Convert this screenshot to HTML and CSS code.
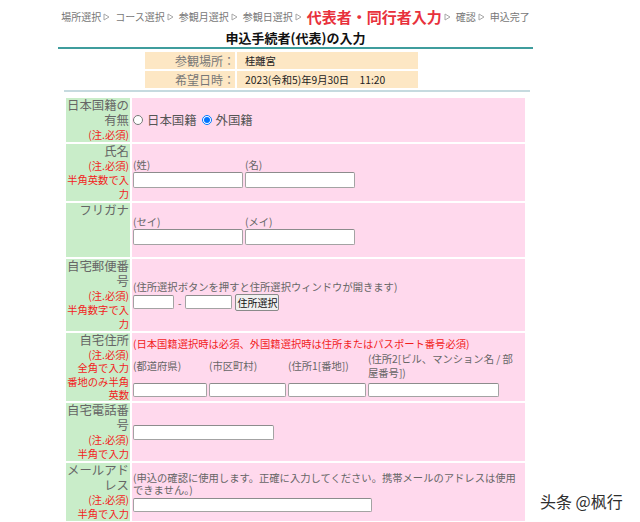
FILE: index.html
```html
<!DOCTYPE html>
<html>

<head>
  <meta charset="utf-8">
  <link rel="stylesheet" href="styles.css">
</head>

<body>
  <div class="page">
    <ol class="steps">
      <li>場所選択</li>
      <li><svg class="sep" width="7" height="8" viewBox="0 0 7 8"><polygon points="1,1 6,4 1,7" /></svg>コース選択</li>
      <li><svg class="sep" width="7" height="8" viewBox="0 0 7 8"><polygon points="1,1 6,4 1,7" /></svg>参観月選択</li>
      <li><svg class="sep" width="7" height="8" viewBox="0 0 7 8"><polygon points="1,1 6,4 1,7" /></svg>参観日選択</li>
      <li class="current"><svg class="sep" width="7" height="8" viewBox="0 0 7 8"><polygon points="1,1 6,4 1,7" /></svg><span>代表者・同行者入力</span></li>
      <li><svg class="sep" width="7" height="8" viewBox="0 0 7 8"><polygon points="1,1 6,4 1,7" /></svg>確認</li>
      <li><svg class="sep" width="7" height="8" viewBox="0 0 7 8"><polygon points="1,1 6,4 1,7" /></svg>申込完了</li>
    </ol>

    <h2 class="title">申込手続者(代表)の入力</h2>

    <table class="visit">
      <tr>
        <td class="visit-label">参観場所：</td>
        <td class="visit-value">桂離宮</td>
      </tr>
      <tr>
        <td class="visit-label">希望日時：</td>
        <td class="visit-value">2023(令和5)年9月30日　11:20</td>
      </tr>
    </table>

    <div class="rule"></div>

    <table class="form">
      <tr>
        <th>
          <span class="name">日本国籍の有無</span>
          <span class="note">(注.必須)</span>
        </th>
        <td>
          <div class="options">
            <label class="opt"><input type="radio" name="nationality">日本国籍</label>
            <label class="opt"><input type="radio" name="nationality" checked>外国籍</label>
          </div>
        </td>
      </tr>
      <tr>
        <th>
          <span class="name">氏名</span>
          <span class="note">(注.必須)</span>
          <span class="note">半角英数で入力</span>
        </th>
        <td>
          <div class="pair">
            <div class="field">
              <span class="small">(姓)</span>
              <input class="text w-name" type="text">
            </div>
            <div class="field">
              <span class="small">(名)</span>
              <input class="text w-name" type="text">
            </div>
          </div>
        </td>
      </tr>
      <tr class="kana">
        <th>
          <span class="name">フリガナ</span>
        </th>
        <td>
          <div class="pair">
            <div class="field">
              <span class="small">(セイ)</span>
              <input class="text w-name" type="text">
            </div>
            <div class="field">
              <span class="small">(メイ)</span>
              <input class="text w-name" type="text">
            </div>
          </div>
        </td>
      </tr>
      <tr>
        <th>
          <span class="name">自宅郵便番号</span>
          <span class="note">(注.必須)</span>
          <span class="note">半角数字で入力</span>
        </th>
        <td>
          <p class="small">(住所選択ボタンを押すと住所選択ウィンドウが開きます)</p>
          <div class="zip">
            <input class="text zip-a" type="text">
            <span class="dash">-</span>
            <input class="text zip-b" type="text">
            <button class="pick">住所選択</button>
          </div>
        </td>
      </tr>
      <tr class="addr">
        <th>
          <span class="name">自宅住所</span>
          <span class="note">(注.必須)</span>
          <span class="note">全角で入力</span>
          <span class="note">番地のみ半角英数</span>
        </th>
        <td>
          <p class="small warn">(日本国籍選択時は必須、外国籍選択時は住所またはパスポート番号必須)</p>
          <div class="addr-grid">
            <span class="small">(都道府県)</span>
            <span class="small">(市区町村)</span>
            <span class="small">(住所1[番地])</span>
            <span class="small">(住所2[ビル、マンション名 / 部屋番号])</span>
            <input class="text" type="text">
            <input class="text" type="text">
            <input class="text" type="text">
            <input class="text addr-4" type="text">
          </div>
        </td>
      </tr>
      <tr>
        <th>
          <span class="name">自宅電話番号</span>
          <span class="note">(注.必須)</span>
          <span class="note">半角で入力</span>
        </th>
        <td>
          <input class="text w-tel" type="text">
        </td>
      </tr>
      <tr>
        <th>
          <span class="name">メールアドレス</span>
          <span class="note">(注.必須)</span>
          <span class="note">半角で入力</span>
        </th>
        <td>
          <p class="small tight">(申込の確認に使用します。正確に入力してください。携帯メールのアドレスは使用できません。)</p>
          <input class="text w-mail" type="text">
        </td>
      </tr>
    </table>
  </div>

  <div class="watermark">头条 @枫行</div>
</body>

</html>
```

FILE: styles.css
```css
:root {
  --label-bg: #c9edc9;
  --field-bg: #ffd9ed;
  --visit-bg: #fde7c4;
  --gray: #666666;
  --red: #f21d1d;
  --teal: #3f9d9d;
}

* {
  margin: 0;
  padding: 0;
  box-sizing: border-box;
}

body {
  background-color: #ffffff;
  color: var(--gray);
  font-family: "Noto Sans CJK JP", "Noto Sans", sans-serif;
  overflow: hidden;
  position: relative;
  height: 522px;
}

.page {
  width: 475px;
  margin-left: 58px;
}

/* step trail */
.steps {
  display: flex;
  justify-content: center;
  align-items: center;
  list-style: none;
  padding-top: 7px;
  height: 27px;
  font-size: 10px;
  color: #777777;
}

.steps li {
  display: flex;
  align-items: center;
  line-height: 20px;
  white-space: nowrap;
}

.sep {
  margin: 0 5px 0 2px;
}

.sep polygon {
  fill: none;
  stroke: #a8a8a8;
  stroke-width: 1;
}

.current span {
  font-size: 15px;
  font-weight: 700;
  color: #e8313c;
}

.title {
  margin-top: 2px;
  font-size: 13px;
  font-weight: 700;
  line-height: 18px;
  color: #111111;
  text-align: center;
  border-bottom: 2px solid var(--teal);
}

/* visit summary */
.visit {
  border-collapse: separate;
  border-spacing: 2px;
  margin: 1px 0 0 85px;
}

.visit td {
  height: 17px;
  background-color: var(--visit-bg);
  line-height: 15px;
}

.visit-label {
  width: 90px;
  text-align: right;
  font-size: 12px;
  color: #777777;
}

.visit-value {
  width: 181px;
  padding-left: 8px;
  font-size: 10.3px;
  color: #222222;
}

.rule {
  height: 2px;
  margin: 0 3px 0 6px;
  background-color: #c6dadf;
}

/* form table */
.form {
  margin: 4px 0 0 6px;
  border-collapse: separate;
  border-spacing: 2px;
  table-layout: fixed;
  width: 463px;
}

.form th {
  width: 64px;
  padding: 0 1px 0 0;
  vertical-align: top;
  text-align: right;
  font-weight: 400;
  background-color: var(--label-bg);
}

.form td {
  padding: 0 1px;
  vertical-align: middle;
  background-color: var(--field-bg);
}

.name {
  display: block;
  font-size: 12.4px;
  line-height: 15px;
  color: var(--gray);
}

.note {
  display: block;
  font-size: 10.3px;
  line-height: 14px;
  color: var(--red);
}

.addr .note {
  line-height: 13.25px;
}

.kana th {
  height: 54px;
}

.small {
  display: block;
  font-size: 10.3px;
  line-height: 13px;
  color: var(--gray);
}

.warn {
  line-height: 14px;
  color: var(--red);
}

.tight {
  line-height: 12px;
}

.options {
  display: flex;
  align-items: center;
  gap: 5px;
}

.opt {
  display: flex;
  align-items: center;
  font-size: 12.4px;
  line-height: 15px;
  color: #555555;
}

.opt input {
  width: 10px;
  height: 10px;
  margin: 0 4px 0 0;
}

.text {
  display: block;
  height: 16px;
  border: 1px solid #a3a3a3;
  border-top-color: #8c8c8c;
  border-radius: 2px;
  background-color: #ffffff;
}

.pair {
  display: flex;
  gap: 2px;
}

.field {
  display: flex;
  flex-direction: column;
  gap: 1px;
}

.w-name {
  width: 110px;
}

.zip {
  display: flex;
  align-items: center;
  margin-top: 1px;
}

.zip .text {
  height: 14px;
}

.zip-a {
  width: 41px;
}

.zip-b {
  width: 47px;
}

.dash {
  margin: 0 4px;
  font-size: 10px;
}

.pick {
  width: 44px;
  height: 17px;
  margin-left: 3px;
  padding: 0;
  border: 1px solid #8a8a8a;
  border-radius: 2px;
  background-color: #f0f0f0;
  color: #111111;
  font-family: inherit;
  font-size: 10px;
  line-height: 15px;
}

.addr-grid {
  display: grid;
  grid-template-columns: 74px 77px 78px 150px;
  column-gap: 2px;
  row-gap: 3px;
  align-items: center;
  margin-top: 1px;
}

.addr-grid .small {
  line-height: 14px;
}

.addr-grid .text {
  width: 100%;
  height: 14px;
}

.addr-grid .addr-4 {
  width: 131px;
}

.w-tel {
  width: 141px;
  height: 15px;
}

.w-mail {
  width: 239px;
  height: 14px;
  margin-top: 2px;
}

.watermark {
  position: absolute;
  left: 540px;
  top: 490px;
  font-family: "Noto Sans CJK SC", sans-serif;
  font-size: 16px;
  line-height: 22px;
  color: #2e2e2e;
}
```
